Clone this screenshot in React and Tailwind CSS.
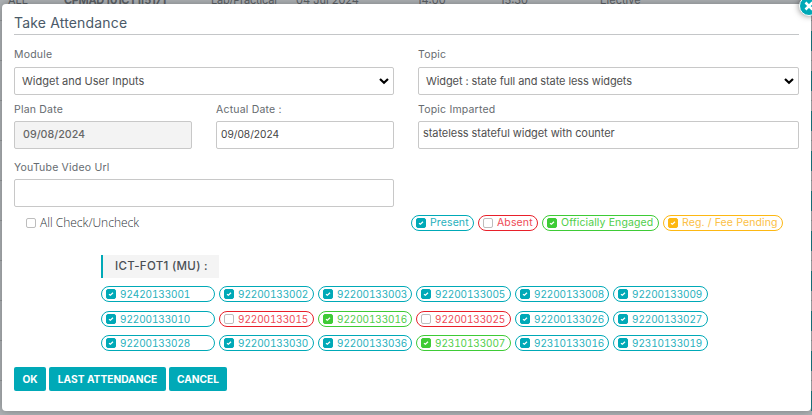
import React from "react";

const TONES = {
  teal: { pill: "border-[#00a9b7] text-[#1fb0bc]", box: "border-[#00a9b7] bg-[#00a9b7]" },
  red: { pill: "border-[#e8202a] text-[#ee4a55]", box: "border-[#bdbdbd] bg-white" },
  green: { pill: "border-[#3ecb36] text-[#4fce49]", box: "border-[#3ecb36] bg-[#3ecb36]" },
  amber: { pill: "border-[#fdb813] text-[#fbc045]", box: "border-[#fdb813] bg-[#fdb813]" },
};

const LEGEND = [
  ["Present", "teal", "w-[63px]"],
  ["Absent", "red", "w-[60px]"],
  ["Officially Engaged", "green", "w-[117px]"],
  ["Reg. / Fee Pending", "amber", "w-[120px]"],
];

const STUDENTS = [
  ["92420133001", "teal"], ["92200133002", "teal"], ["92200133003", "teal"],
  ["92200133005", "teal"], ["92200133008", "teal"], ["92200133009", "teal"],
  ["92200133010", "teal"], ["92200133015", "red"], ["92200133016", "green"],
  ["92200133025", "red"], ["92200133026", "teal"], ["92200133027", "teal"],
  ["92200133028", "teal"], ["92200133030", "teal"], ["92200133036", "teal"],
  ["92310133007", "green"], ["92310133016", "teal"], ["92310133019", "teal"],
];

function Pill({ label, tone, size = "", text = "text-[10.5px] tracking-[0.12px]" }) {
  const t = TONES[tone];
  return (
    <span className={`flex h-4 items-center rounded-full border pl-1 leading-none whitespace-nowrap ${t.pill} ${size}`}>
      <span className={`flex size-[10px] shrink-0 items-center justify-center rounded-[2px] border ${t.box}`}>
        {tone !== "red" && (
          <svg viewBox="0 0 8 8" className="size-2 shrink-0" fill="none" stroke="#fff" strokeWidth="1.2">
            <path d="M2 4.2 3.4 5.3 6 2.8" />
          </svg>
        )}
      </span>
      <span className={`ml-1 ${text}`}>{label}</span>
    </span>
  );
}

function Label({ children }) {
  return <div className="h-[14px] text-[10.5px] leading-[14px] tracking-[0.2px] text-[#666b70]">{children}</div>;
}

function Select({ children, tracking = "" }) {
  return (
    <div className="flex h-7 items-center justify-between rounded-[2px] border border-[#c8c8c8] pr-1 pl-[7px] text-[11px] text-[#505050]">
      <span className={tracking}>{children}</span>
      <svg viewBox="0 0 10 8" className="h-2 w-[10px]" fill="none" stroke="#000" strokeWidth="2.2">
        <path d="M1 2 5 5.8 9 2" />
      </svg>
    </div>
  );
}

function Button({ children, size }) {
  return (
    <button className={`h-6 rounded-[2px] bg-[#00a9b7] text-[10.2px] leading-6 font-bold whitespace-nowrap text-white ${size}`}>
      {children}
    </button>
  );
}

function Backdrop() {
  return (
    <div className="flex h-full flex-col">
      <div className="-mt-[7px] grid h-[28px] shrink-0 grid-cols-[56px_147px_85px_121px_83px_100px_1fr] border-b border-[#94989b] pl-2 text-[11px] leading-[15px] whitespace-nowrap text-[#5c6166]">
        <span>ALL</span>
        <span className="font-bold tracking-[-0.35px]">CPMAD |01CT1|5171</span>
        <span className="tracking-[-0.2px]">Lab/Practical</span>
        <span>04 Jul 2024</span>
        <span>14:00</span>
        <span>15:30</span>
        <span>Elective</span>
      </div>
      {Array.from({ length: 10 }, (_, i) => (
        <div key={i} className="flex h-10 shrink-0 items-center justify-end border-b border-[#94989b]">
          <div className="h-5 w-px bg-[#1c7d87]" />
        </div>
      ))}
    </div>
  );
}

export default function App() {
  return (
    <div className="relative h-[415px] w-[812px] overflow-hidden bg-[#aeb2b5] font-['Inter','Liberation_Sans',sans-serif]">
      <Backdrop />
      <div className="absolute top-1 left-[2px] h-[407px] w-[809px] rounded-[4px] bg-white px-3 shadow-[0_0_8px_rgba(0,0,0,0.3)]">
        <h1 className="h-[31px] w-[785px] border-b border-[#c4c6c8] pt-[9px] text-[14px] leading-5 tracking-[0.17px] text-[#4a5a68]">Take Attendance</h1>
        <div className="mt-[13px] grid w-[785px] grid-cols-[380px_381px] gap-x-6">
          <div>
            <Label>Module</Label>
            <div className="mt-[5px]"><Select>Widget and User Inputs</Select></div>
            <div className="mt-2 grid grid-cols-[178px_178px] gap-x-6">
              <div>
                <Label>Plan Date</Label>
                <div className="mt-1 flex h-7 items-center rounded-[2px] border border-[#c8c8c8] bg-[#f3f3f3] pl-2 text-[10.7px] font-medium text-[#666]">09/08/2024</div>
              </div>
              <div>
                <Label>Actual Date :</Label>
                <div className="mt-1 flex h-7 items-center rounded-[2px] border border-[#c8c8c8] pl-1 text-[10.2px] text-[#444]">09/08/2024</div>
              </div>
            </div>
            <div className="mt-[12px]"><Label>YouTube Video Url</Label></div>
            <div className="mt-1 h-7 rounded-[2px] border border-[#c8c8c8]" />
          </div>
          <div>
            <Label>Topic</Label>
            <div className="mt-[5px]"><Select tracking="tracking-[-0.09px]">Widget : state full and state less widgets</Select></div>
            <div className="mt-2"><Label>Topic Imparted</Label></div>
            <div className="mt-1 h-7 rounded-[2px] border border-[#c8c8c8] pt-1 pl-1 text-[11px] leading-[14px] tracking-[-0.07px] text-[#505050]">stateless stateful widget with counter</div>
          </div>
        </div>
        <div className="mt-2 flex h-4 items-center">
          <div className="flex w-[397px] items-center pl-3">
            <span className="size-[10px] rounded-[2px] border border-[#bdbdbd]" />
            <span className="ml-1 font-['Open_Sans'] text-[12px] leading-4 font-light text-[#2c3238]">All Check/Uncheck</span>
          </div>
          <div className="flex gap-1">
            {LEGEND.map(([label, tone, size]) => (
              <Pill key={label} label={label} tone={tone} size={size} />
            ))}
          </div>
        </div>
        <div className="mt-6 ml-[87px] h-[23px] w-[118px] border-l-2 border-[#00a9b7] bg-[#f4f4f4] pl-3 text-[11.5px] leading-[22px] font-medium tracking-[0.3px] text-[#4a4f55]">ICT-FOT1 (MU) :</div>
        <div className="mt-2 ml-[87px] grid grid-cols-[114px_95px_94px_95px_94px_95px] gap-x-1 gap-y-[8.5px]">
          {STUDENTS.map(([id, tone]) => (
            <Pill key={id} label={id} tone={tone} text="text-[10px] tracking-[-0.1px] tabular-nums" />
          ))}
        </div>
        <div className="mt-4 flex gap-[3px]">
          <Button size="w-8">OK</Button>
          <Button size="w-[117px]">LAST ATTENDANCE</Button>
          <Button size="w-[58px]">CANCEL</Button>
        </div>
      </div>
      <button aria-label="Close" className="absolute -top-[4px] left-[799px] flex size-5 items-center justify-center rounded-full border border-white bg-[#00a9b7] shadow-[0_0_6px_rgba(0,0,0,0.5)]">
        <svg viewBox="0 0 10 10" className="size-[10px]" fill="none" stroke="#fff" strokeWidth="2.6">
          <path d="m1.5 1.5 7 7m0-7-7 7" />
        </svg>
      </button>
    </div>
  );
}
